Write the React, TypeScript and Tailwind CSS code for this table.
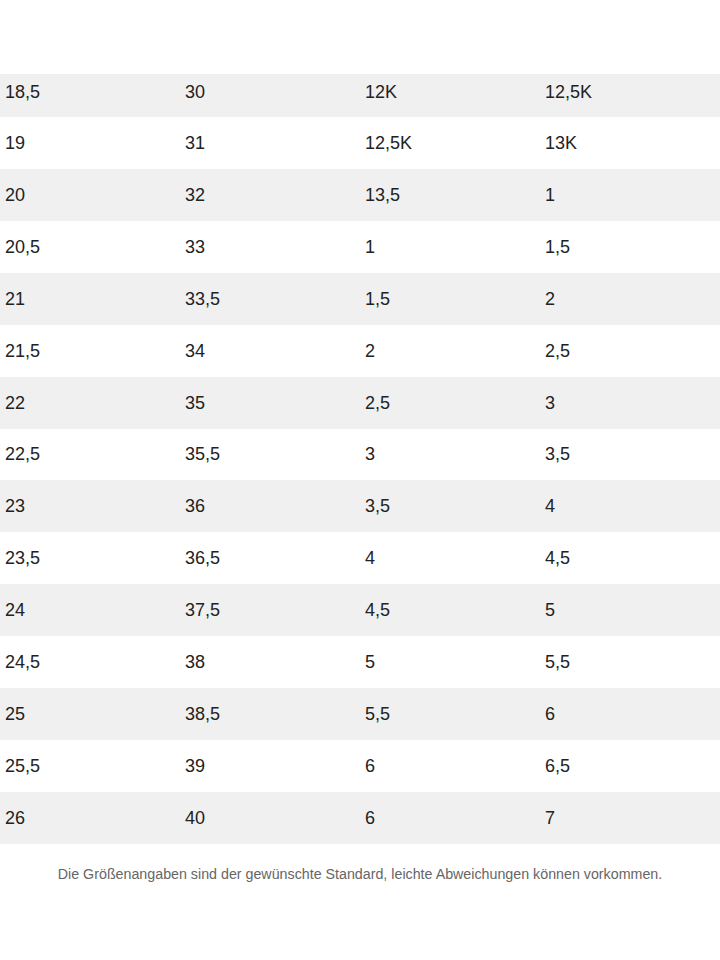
const rows: string[][] = [
  ["18,5", "30", "12K", "12,5K"],
  ["19", "31", "12,5K", "13K"],
  ["20", "32", "13,5", "1"],
  ["20,5", "33", "1", "1,5"],
  ["21", "33,5", "1,5", "2"],
  ["21,5", "34", "2", "2,5"],
  ["22", "35", "2,5", "3"],
  ["22,5", "35,5", "3", "3,5"],
  ["23", "36", "3,5", "4"],
  ["23,5", "36,5", "4", "4,5"],
  ["24", "37,5", "4,5", "5"],
  ["24,5", "38", "5", "5,5"],
  ["25", "38,5", "5,5", "6"],
  ["25,5", "39", "6", "6,5"],
  ["26", "40", "6", "7"],
];

export default function App() {
  return (
    <div
      className="w-[720px] h-[960px] bg-white text-[#222222]"
      style={{ fontFamily: '"Liberation Sans", Arial, sans-serif' }}
    >
      <div className="h-[74px]" />
      <div className="flex flex-col">
        {rows.map((r, i) => (
          <div
            key={i}
            className={
              (i % 2 === 0 ? "bg-[#f0f0f0] " : "bg-white ") +
              (i === 0 ? "h-[43px] pb-[7px] " : "h-[51.93px] ") +
              "grid grid-cols-4 items-center text-[18px] leading-[20px]"
            }
          >
            {r.map((c, j) => (
              <div key={j} className="pl-[5px]">
                {c}
              </div>
            ))}
          </div>
        ))}
      </div>
      <div className="pt-[21px] text-center text-[14.25px] leading-[18px] text-[#666666]">
        Die Größenangaben sind der gewünschte Standard, leichte Abweichungen können vorkommen.
      </div>
    </div>
  );
}
